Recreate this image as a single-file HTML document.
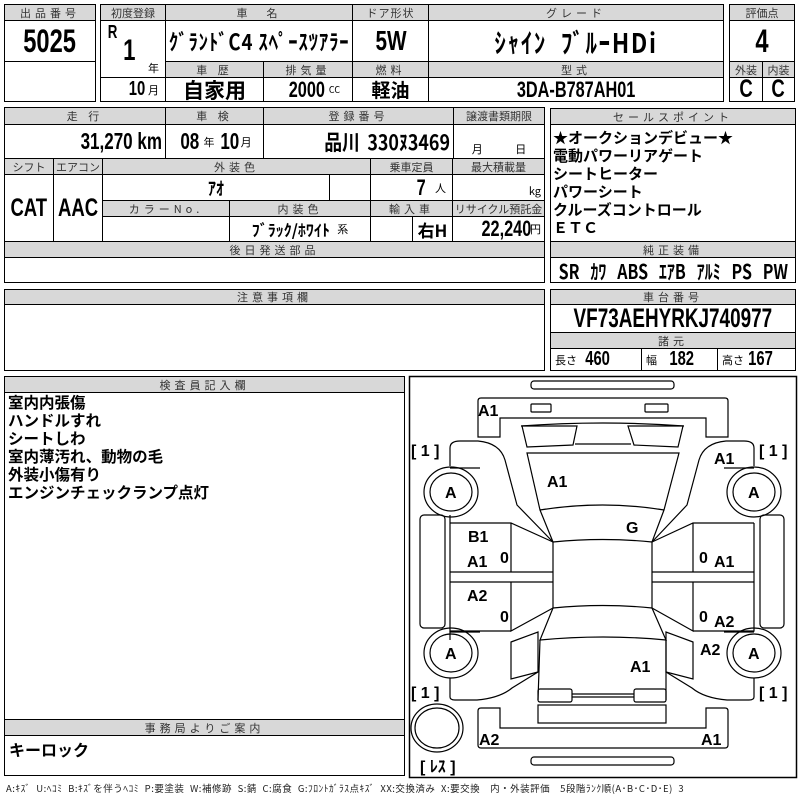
<!DOCTYPE html>
<html><head><meta charset="utf-8"><style>
*{margin:0;padding:0;box-sizing:border-box}
body{width:800px;height:800px;background:#fff;position:relative;overflow:hidden;font-family:"Liberation Sans","Noto Sans CJK JP",sans-serif;color:#000}
.c{position:absolute;border:1.5px solid #000;display:flex;align-items:center;justify-content:center;white-space:nowrap;overflow:hidden}
.h{background:#d8d8d8;font-size:11px;color:#333;letter-spacing:4px;font-family:"Noto Sans CJK JP",sans-serif}
.b{font-family:"Liberation Sans","Noto Sans CJK JP",sans-serif;font-weight:bold}
.n{display:inline-block;transform:scaleX(.74);transform-origin:center}
.r{transform-origin:right}
.l{transform-origin:left}
.j{font-family:"Noto Sans CJK JP",sans-serif;font-weight:bold}
.t{position:absolute;white-space:nowrap}
.s{font-size:11px;font-weight:normal;font-family:"Noto Sans CJK JP",sans-serif}
svg text{font-family:"Liberation Sans",sans-serif;font-weight:bold;font-size:16px}
</style></head><body>
<div class="c h" style="left:4px;top:4px;width:92px;height:17px">出品番号</div>
<div class="c b" style="left:4px;top:20px;width:92px;height:42px;font-size:32px"><span class="n">5025</span></div>
<div class="c" style="left:4px;top:61px;width:92px;height:41px"></div>
<div class="c h" style="left:100px;top:4px;width:66px;height:17px;letter-spacing:0">初度登録</div>
<div class="c h" style="left:165px;top:4px;width:188px;height:17px">車　名</div>
<div class="c h" style="left:352px;top:4px;width:77px;height:17px;letter-spacing:1px">ドア形状</div>
<div class="c h" style="left:428px;top:4px;width:296px;height:17px">グレード</div>
<div class="c" style="left:100px;top:20px;width:66px;height:58px"></div>
<div class="t b" style="left:106px;top:22px;font-size:18px"><span class="n">R</span></div>
<div class="t b" style="left:121px;top:34px;font-size:30px"><span class="n">1</span></div>
<div class="t s" style="left:148px;top:60px">年</div>
<div class="c" style="left:100px;top:77px;width:66px;height:25px;justify-content:flex-end;padding-right:6px"><span class="b n r" style="font-size:20px">10</span><span class="s">&nbsp;月</span></div>
<div class="c j" style="left:165px;top:20px;width:188px;height:42px;font-size:22px"><span class="n" style="transform:scaleX(.85);letter-spacing:1px">ｸﾞﾗﾝﾄﾞC4 ｽﾍﾟｰｽﾂｱﾗｰ</span></div>
<div class="c b" style="left:352px;top:20px;width:77px;height:42px;font-size:28px"><span class="n">5W</span></div>
<div class="c j" style="left:428px;top:20px;width:296px;height:42px;font-size:27px"><span class="n" style="transform:scaleX(.85);letter-spacing:2px;word-spacing:8px">ｼｬｲﾝ ﾌﾞﾙｰHDi</span></div>
<div class="c h" style="left:165px;top:61px;width:99px;height:17px">車 歴</div>
<div class="c h" style="left:263px;top:61px;width:90px;height:17px">排気量</div>
<div class="c h" style="left:352px;top:61px;width:77px;height:17px">燃料</div>
<div class="c h" style="left:428px;top:61px;width:296px;height:17px">型式</div>
<div class="c j" style="left:165px;top:77px;width:99px;height:25px;font-size:21px">自家用</div>
<div class="c" style="left:263px;top:77px;width:90px;height:25px"><span class="b n r" style="font-size:22px">2000</span><span class="s" style="font-size:9px">&nbsp;&nbsp;CC</span></div>
<div class="c j" style="left:352px;top:77px;width:77px;height:25px;font-size:19px">軽油</div>
<div class="c b" style="left:428px;top:77px;width:296px;height:25px;font-size:22px"><span class="n">3DA-B787AH01</span></div>
<div class="c h" style="left:729px;top:4px;width:66px;height:17px;letter-spacing:0">評価点</div>
<div class="c b" style="left:729px;top:20px;width:66px;height:42px;font-size:32px"><span class="n">4</span></div>
<div class="c h" style="left:729px;top:61px;width:34px;height:17px;letter-spacing:0">外装</div>
<div class="c h" style="left:762px;top:61px;width:33px;height:17px;letter-spacing:0">内装</div>
<div class="c b" style="left:729px;top:77px;width:34px;height:25px;font-size:25px"><span class="n">C</span></div>
<div class="c b" style="left:762px;top:77px;width:33px;height:25px;font-size:25px"><span class="n">C</span></div>
<div class="c h" style="left:4px;top:107px;width:162px;height:18px">走 行</div>
<div class="c h" style="left:165px;top:107px;width:99px;height:18px">車 検</div>
<div class="c h" style="left:263px;top:107px;width:191px;height:18px">登録番号</div>
<div class="c h" style="left:453px;top:107px;width:92px;height:18px;letter-spacing:0">譲渡書類期限</div>
<div class="c b" style="left:4px;top:124px;width:162px;height:35px;justify-content:flex-end;padding-right:3px;font-size:23px"><span class="n r">31,270 km</span></div>
<div class="c" style="left:165px;top:124px;width:99px;height:35px"><span class="b n" style="font-size:23px;margin-right:-2px">08</span><span class="s">&nbsp;年&nbsp;</span><span class="b n" style="font-size:23px;margin-right:-2px">10</span><span class="s">月</span></div>
<div class="c j" style="left:263px;top:124px;width:191px;height:35px;justify-content:flex-end;padding-right:3px;font-size:21px"><span class="n r" style="transform:scaleX(.85);word-spacing:4px">品川 330ﾇ3469</span></div>
<div class="c s" style="left:453px;top:124px;width:92px;height:35px;padding-top:14px;word-spacing:30px">月 日</div>
<div class="c h" style="left:4px;top:158px;width:50px;height:17px;letter-spacing:0">シフト</div>
<div class="c h" style="left:53px;top:158px;width:50px;height:17px;letter-spacing:0">エアコン</div>
<div class="c h" style="left:102px;top:158px;width:269px;height:17px">外装色</div>
<div class="c h" style="left:370px;top:158px;width:83px;height:17px;letter-spacing:0">乗車定員</div>
<div class="c h" style="left:452px;top:158px;width:93px;height:17px;letter-spacing:0">最大積載量</div>
<div class="c b" style="left:4px;top:174px;width:50px;height:68px;font-size:25px"><span class="n">CAT</span></div>
<div class="c b" style="left:53px;top:174px;width:50px;height:68px;font-size:25px"><span class="n">AAC</span></div>
<div class="c j" style="left:102px;top:174px;width:228px;height:27px;font-size:18px"><span class="n" style="transform:scaleX(.9)">ｱｵ</span></div>
<div class="c" style="left:329px;top:174px;width:42px;height:27px"></div>
<div class="c" style="left:370px;top:174px;width:83px;height:27px;justify-content:flex-end;padding-right:6px"><span class="b n" style="font-size:22px">7</span><span class="s">&nbsp;&nbsp;&nbsp;人</span></div>
<div class="c s" style="left:452px;top:174px;width:93px;height:27px;justify-content:flex-end;padding-right:3px;padding-top:6px">kg</div>
<div class="c h" style="left:102px;top:200px;width:128px;height:17px">カラーNo.</div>
<div class="c h" style="left:229px;top:200px;width:142px;height:17px">内装色</div>
<div class="c h" style="left:370px;top:200px;width:83px;height:17px">輸入車</div>
<div class="c h" style="left:452px;top:200px;width:93px;height:17px;letter-spacing:0">リサイクル預託金</div>
<div class="c" style="left:102px;top:216px;width:128px;height:26px"></div>
<div class="c" style="left:229px;top:216px;width:142px;height:26px"><span class="j" style="font-size:16px">ﾌﾞﾗｯｸ/ﾎﾜｲﾄ</span><span class="s">&nbsp;&nbsp;&nbsp;系</span></div>
<div class="c" style="left:370px;top:216px;width:43px;height:26px"></div>
<div class="c j" style="left:412px;top:216px;width:41px;height:26px;font-size:17px">右H</div>
<div class="c" style="left:452px;top:216px;width:93px;height:26px;justify-content:flex-end;padding-right:3px"><span class="b n r" style="font-size:22px;margin-right:-1px">22,240</span><span class="s">円</span></div>
<div class="c h" style="left:4px;top:241px;width:541px;height:17px">後日発送部品</div>
<div class="c" style="left:4px;top:257px;width:541px;height:26px"></div>
<div class="c h" style="left:550px;top:108px;width:246px;height:17px">セールスポイント</div>
<div class="c" style="left:550px;top:124px;width:246px;height:118px"></div>
<div class="t j" style="left:553px;top:129px;font-size:15px;line-height:18px">★オークションデビュー★<br>電動パワーリアゲート<br>シートヒーター<br>パワーシート<br>クルーズコントロール<br>ＥＴＣ</div>
<div class="c h" style="left:550px;top:241px;width:246px;height:17px">純正装備</div>
<div class="c j" style="left:550px;top:257px;width:246px;height:26px;font-size:20px"><span class="n" style="transform:scaleX(.8);word-spacing:9px">SR ｶﾜ ABS ｴｱB ｱﾙﾐ PS PW</span></div>
<div class="c h" style="left:4px;top:289px;width:541px;height:16px">注意事項欄</div>
<div class="c" style="left:4px;top:304px;width:541px;height:67px"></div>
<div class="c h" style="left:550px;top:289px;width:246px;height:16px">車台番号</div>
<div class="c b" style="left:550px;top:304px;width:246px;height:29px;font-size:27px"><span class="n" style="transform:scaleX(.7)">VF73AEHYRKJ740977</span></div>
<div class="c h" style="left:550px;top:332px;width:246px;height:17px">諸元</div>
<div class="c" style="left:550px;top:348px;width:92px;height:23px;justify-content:flex-start;padding-left:4px"><span class="s">長さ</span><span class="b n l" style="font-size:20px">&nbsp;&nbsp;460</span></div>
<div class="c" style="left:641px;top:348px;width:77px;height:23px;justify-content:flex-start;padding-left:4px"><span class="s">幅</span><span class="b n l" style="font-size:20px">&nbsp;&nbsp;&nbsp;182</span></div>
<div class="c" style="left:717px;top:348px;width:79px;height:23px;justify-content:flex-start;padding-left:4px"><span class="s">高さ</span><span class="b n l" style="font-size:20px">&nbsp;167</span></div>
<div class="c h" style="left:4px;top:376px;width:401px;height:17px">検査員記入欄</div>
<div class="c" style="left:4px;top:392px;width:401px;height:328px"></div>
<div class="t j" style="left:8px;top:393px;font-size:15.5px;line-height:18px">室内内張傷<br>ハンドルすれ<br>シートしわ<br>室内薄汚れ、動物の毛<br>外装小傷有り<br>エンジンチェックランプ点灯</div>
<div class="c h" style="left:4px;top:719px;width:401px;height:17px">事務局よりご案内</div>
<div class="c" style="left:4px;top:735px;width:401px;height:41px"></div>
<div class="t j" style="left:9px;top:737px;font-size:16px">キーロック</div>
<div class="t" style="left:6px;top:781px;font-size:9.5px;letter-spacing:.5px;word-spacing:3px;font-family:'Noto Sans CJK JP',sans-serif;color:#222">A:ｷｽﾞ U:ﾍｺﾐ B:ｷｽﾞを伴うﾍｺﾐ P:要塗装 W:補修跡 S:錆 C:腐食 G:ﾌﾛﾝﾄｶﾞﾗｽ点ｷｽﾞ XX:交換済み X:要交換　内・外装評価　5段階ﾗﾝｸ順(A･B･C･D･E) 3</div>
<svg style="position:absolute;left:0;top:0" width="800" height="800" fill="none" stroke="#000" stroke-width="1.2">
<rect x="409.5" y="376.5" width="387" height="401" stroke-width="1.5"/>
<rect x="531" y="381" width="143" height="8" rx="3"/>
<path d="M478,401 Q478,398 481,398 L725,398 Q728,398 728,401 L728,437 L706,437 L706,418 L500,418 L500,437 L478,437 Z"/>
<rect x="531" y="404" width="20" height="8" rx="1"/><rect x="645" y="404" width="23" height="8" rx="1"/>
<path d="M522,426 L577,426 L573,445 L527,447 Z"/><path d="M628,426 L683,426 L678,447 L634,445 Z"/>
<path d="M521,426 Q603,420 684,426"/><path d="M575,444 L631,444"/>
<path d="M527,453 L679,453 L664,510 Q603,500 540,510 Z"/>
<path d="M540,510 L553,542 Q603,537 652,542 L664,510"/>
<path d="M553,542 L553,608 Q603,603 652,608 L652,542"/>
<path d="M553,608 L540,640 Q603,634 666,640 L652,608"/>
<path d="M540,640 L538,700 M666,640 L666,700"/>
<rect x="538" y="689" width="34" height="13" rx="2"/><rect x="634" y="689" width="32" height="13" rx="2"/>
<path d="M572,694 L634,694 M572,697 L634,697"/>
<rect x="538" y="705" width="128" height="18"/>
<path d="M478,711 Q478,708 481,708 L500,708 L500,728 L706,728 L706,708 L725,708 Q728,708 728,711 L728,745 Q728,748 725,748 L481,748 Q478,748 478,745 Z"/>
<rect x="531" y="757" width="143" height="8" rx="3"/>
<path d="M450,466 L450,448 Q450,441 460,441 L478,441 Q500,443 505,460 L517,505 L553,542"/>
<path d="M480,468 L450,468"/>
<path d="M450,515 L450,523 L511,523 L553,542 M511,523 L511,572 M450,572 L553,572 M450,582 L553,582 M511,582 L511,631 L553,608 M450,523 L450,631 L511,631"/>
<path d="M450,640 L450,631 M511,642 L538,632 L538,672 L511,679 Z"/>
<path d="M480,632 L450,632 M450,678 L450,697 Q450,700 455,700 L477,700 Q500,698 512,688 L538,672"/>
<rect x="420" y="515" width="25" height="113" rx="4"/>
<path d="M754,466 L754,448 Q754,441 744,441 L726,441 Q704,443 699,460 L687,505 L652,542"/>
<path d="M724,468 L754,468"/>
<path d="M754,523 L693,523 L652,542 M693,523 L693,572 M754,572 L652,572 M754,582 L652,582 M693,582 L693,631 L652,608 M754,523 L754,631 L693,631"/>
<path d="M693,642 L666,632 L666,672 L693,679 Z"/>
<path d="M724,632 L754,632 M754,678 L754,697 Q754,700 749,700 L727,700 Q704,698 692,688 L666,672"/>
<rect x="760" y="515" width="24" height="113" rx="4"/>
<ellipse cx="451" cy="492" rx="27" ry="25"/><ellipse cx="451" cy="492" rx="21" ry="19"/>
<ellipse cx="754" cy="492" rx="27" ry="25"/><ellipse cx="754" cy="492" rx="21" ry="19"/>
<ellipse cx="451" cy="653" rx="27" ry="25"/><ellipse cx="451" cy="653" rx="21" ry="19"/>
<ellipse cx="754" cy="653" rx="27" ry="25"/><ellipse cx="754" cy="653" rx="21" ry="19"/>
<ellipse cx="437" cy="728" rx="26" ry="24"/><ellipse cx="437" cy="728" rx="22" ry="20"/>
<g fill="#000" stroke="none">
<text x="478" y="416">A1</text>
<text x="411" y="456" font-weight="normal">[ 1 ]</text>
<text x="759" y="456" font-weight="normal">[ 1 ]</text>
<text x="411" y="698" font-weight="normal">[ 1 ]</text>
<text x="759" y="698" font-weight="normal">[ 1 ]</text>
<text x="714" y="464">A1</text>
<text x="547" y="487">A1</text>
<text x="626" y="533">G</text>
<text x="445" y="498">A</text><text x="748" y="498">A</text>
<text x="445" y="659">A</text><text x="748" y="659">A</text>
<text x="468" y="542">B1</text>
<text x="467" y="567">A1</text>
<text x="467" y="601">A2</text>
<text x="714" y="567">A1</text>
<text x="714" y="627">A2</text>
<text x="700" y="655">A2</text>
<text x="630" y="672">A1</text>
<text x="479" y="745">A2</text>
<text x="701" y="745">A1</text>
<text x="500" y="563" font-size="12" font-weight="normal">0</text>
<text x="500" y="622" font-size="12" font-weight="normal">0</text>
<text x="699" y="563" font-size="12" font-weight="normal">0</text>
<text x="699" y="622" font-size="12" font-weight="normal">0</text>
<text x="420" y="772" font-size="13" font-weight="normal">[ <tspan font-weight="bold" font-family="Noto Sans CJK JP">ﾚｽ</tspan> ]</text>
</g>
</svg>
</body></html>
